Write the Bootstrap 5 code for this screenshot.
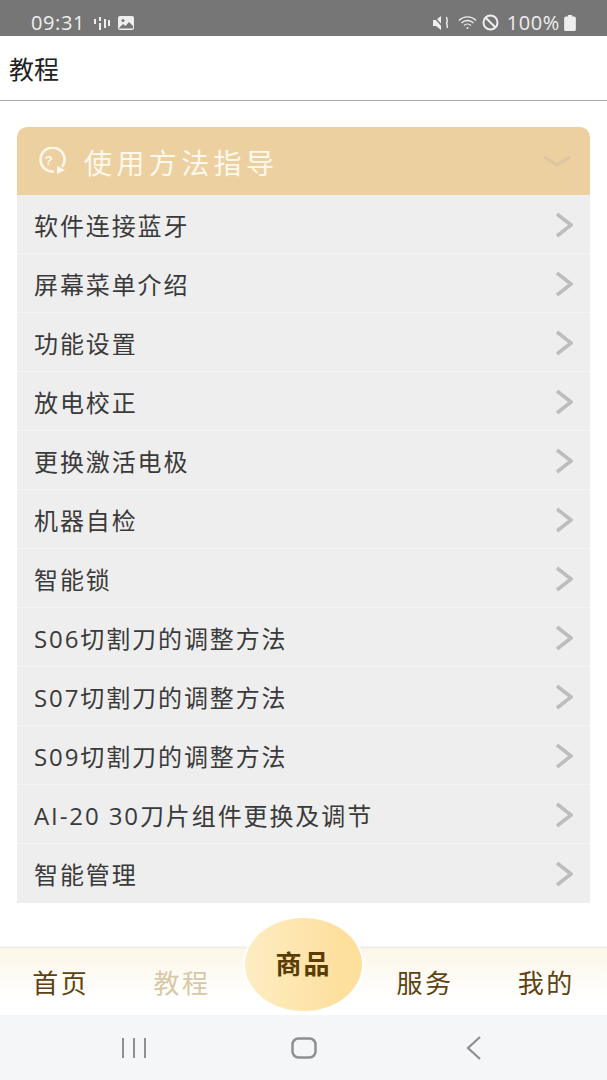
<!DOCTYPE html>
<html lang="zh">
<head>
  <meta charset="UTF-8">
  <meta name="viewport" content="width=device-width, initial-scale=1">
  <title>教程</title>
  <link rel="stylesheet" href="https://cdn.jsdelivr.net/npm/bootstrap@5.3.0/dist/css/bootstrap.min.css">
  <style>
    html, body { height: 1080px; overflow: hidden; }
    body { font-family: "Open Sans", "Noto Sans CJK SC", sans-serif; background: #fff; color: #333; }
    .status-bar { height: 36px; background: #767676; color: #eee; padding: 9px 31px 0 31px; font-size: 20px; letter-spacing: .6px; }
    .page-title { height: 65px; padding: 3px 0 0 9px; font-size: 25px; color: #222; border-bottom: 1px solid #aaa; }
    .guide-wrap { height: 845px; padding: 26px 17px 0; }
    .guide-box { height: 775px; }
    .guide-head { height: 68px; background: #edd09f; color: #fdf8ee; border-radius: 10px 10px 0 0; padding: 0 19px 0 19px; font-size: 28px; letter-spacing: 4.4px; }
    .guide-head span { padding-top: 3px; }
    .guide-row { height: 59px; background: #eeeeee; border-bottom: 1px solid #f4f4f4; padding: 3px 17px 0 17px; font-size: 24px; letter-spacing: 1.9px; color: #3a3a3a; }
    .guide-row svg { margin-top: -2px; }
    .guide-row:last-child { border-bottom: 0; }
    .tab-strip { height: 69px; background: linear-gradient(#fdf7e8, #fff 75%); border-top: 3px solid #f3f1ee; position: relative; }
    .tab-item { flex: 1 1 0; text-align: center; font-size: 26px; letter-spacing: 2.5px; color: #5c4311; padding-top: 15px; }
    .tab-item.on { color: #d9c8a6; }
    .shop-btn { position: absolute; left: 245px; top: -31px; width: 117px; height: 93px; border-radius: 50%; border: 0; background: linear-gradient(90deg, #fdedc4, #fedf9c 85%); box-shadow: 0 0 0 2px #fff; color: #5a3c04; font-weight: 700; font-size: 26px; letter-spacing: 2px; padding: 0; }
    .nav-keys { height: 65px; background: #f5f6f8; }
    .nav-key { width: 170px; }
  </style>
</head>
<body>

<div class="status-bar d-flex align-items-center justify-content-between">
  <div class="d-flex align-items-center">
    <span>09:31</span>
    <svg class="ms-2" width="17" height="16" viewBox="0 0 17 16" fill="none" stroke="#eee" stroke-width="2"><path d="M2 4v5M7 2v4M7 8v7M12 4v9M16 5v6"/></svg>
    <svg class="ms-2" width="16" height="14" viewBox="0 0 16 14"><rect width="16" height="14" rx="2" fill="#eee"/><circle cx="5" cy="4.500" r="1.500" fill="#767676"/><path d="M1 12l4-4 2.500 2L11 6l4 4v2.500H1z" fill="#767676"/></svg>
  </div>
  <div class="d-flex align-items-center">
    <svg width="17" height="14" viewBox="0 0 17 14"><path d="M0 4h3l5-4v14l-5-4H0z" fill="#eee"/><path d="M1 1l11 12" stroke="#767676" stroke-width="1.500"/><path d="M14 1c-1.500 2 1.500 3 0 5s1.500 3 0 6" fill="none" stroke="#eee" stroke-width="1.500"/></svg>
    <svg class="ms-2" width="20" height="15" viewBox="0 0 20 15" fill="none" stroke="#eee" stroke-width="1.300"><path d="M1 5.500a12 12 0 0 1 17 0M3.500 8a8.500 8.500 0 0 1 12 0M6 10.500a5 5 0 0 1 7 0"/><circle cx="9.500" cy="13" r="1" fill="#eee" stroke="none"/></svg>
    <svg class="ms-1" width="17" height="17" viewBox="0 0 17 17" fill="none" stroke="#eee" stroke-width="2"><circle cx="8.500" cy="8.500" r="7"/><path d="M3.700 3.700l9.600 9.600"/></svg>
    <span class="ms-2">100%</span>
    <svg class="ms-1" width="12" height="16" viewBox="0 0 11 15"><path d="M3.500 0h4v1.500H9.500a1.500 1.500 0 0 1 1.500 1.500v10.500a1.500 1.500 0 0 1-1.500 1.500h-8A1.500 1.500 0 0 1 0 13.500V3a1.500 1.500 0 0 1 1.500-1.500h2z" fill="#eee"/></svg>
  </div>
</div>

<div class="page-title d-flex align-items-center">教程</div>

<div class="guide-wrap">
  <div class="guide-box">
    <div class="guide-head d-flex align-items-center">
      <svg width="32" height="28" viewBox="0 0 32 28" fill="none" stroke="#fdf8ee" stroke-width="2.500" class="me-3">
        <path d="M26 20A12 12 0 1 0 18 24.500"/>
        <path d="M21 19l8 4-8 4z" fill="#fdf8ee" stroke="none"/>
        <text x="15" y="18" font-size="13" font-weight="700" fill="#fdf8ee" stroke="none" text-anchor="middle" font-family="Liberation Sans, sans-serif">?</text>
      </svg>
      <span class="flex-grow-1">使用方法指导</span>
      <svg width="28" height="12" viewBox="0 0 28 12" fill="none" stroke="#dcc6a0" stroke-width="3"><path d="M1 2l13 8 13-8"/></svg>
    </div>
    <div id="rows"></div>
  </div>
</div>

<div class="tab-strip d-flex">
  <div class="tab-item">首页</div>
  <div class="tab-item on">教程</div>
  <div class="tab-item"></div>
  <div class="tab-item">服务</div>
  <div class="tab-item">我的</div>
  <button class="shop-btn" type="button">商品</button>
</div>

<div class="nav-keys d-flex align-items-center justify-content-center">
  <div class="nav-key d-flex justify-content-center">
    <svg width="26" height="22" viewBox="0 0 26 22" stroke="#8d8f93" stroke-width="2"><path d="M2 1v20M13 1v20M24 1v20"/></svg>
  </div>
  <div class="nav-key d-flex justify-content-center">
    <svg width="26" height="22" viewBox="0 0 26 22" fill="none" stroke="#8d8f93" stroke-width="2.500"><rect x="1.500" y="1.500" width="23" height="19" rx="6"/></svg>
  </div>
  <div class="nav-key d-flex justify-content-center">
    <svg width="16" height="24" viewBox="0 0 16 24" fill="none" stroke="#8d8f93" stroke-width="2.200"><path d="M14 1L2 12l12 11"/></svg>
  </div>
</div>

<script>
  // 教程列表
  const items = ['软件连接蓝牙', '屏幕菜单介绍', '功能设置', '放电校正', '更换激活电极', '机器自检', '智能锁',
    'S06切割刀的调整方法', 'S07切割刀的调整方法', 'S09切割刀的调整方法', 'AI-20 30刀片组件更换及调节', '智能管理'];
  document.getElementById('rows').innerHTML = items.map(t => `
    <div class="guide-row d-flex align-items-center justify-content-between">
      <span>${t}</span>
      <svg width="18" height="26" viewBox="0 0 18 26" fill="none" stroke="#bdbdbd" stroke-width="3.500"><path d="M2 2l14 11L2 24"/></svg>
    </div>`).join('');
</script>

<script src="https://cdn.jsdelivr.net/npm/bootstrap@5.3.0/dist/js/bootstrap.bundle.min.js"></script>
</body>
</html>
